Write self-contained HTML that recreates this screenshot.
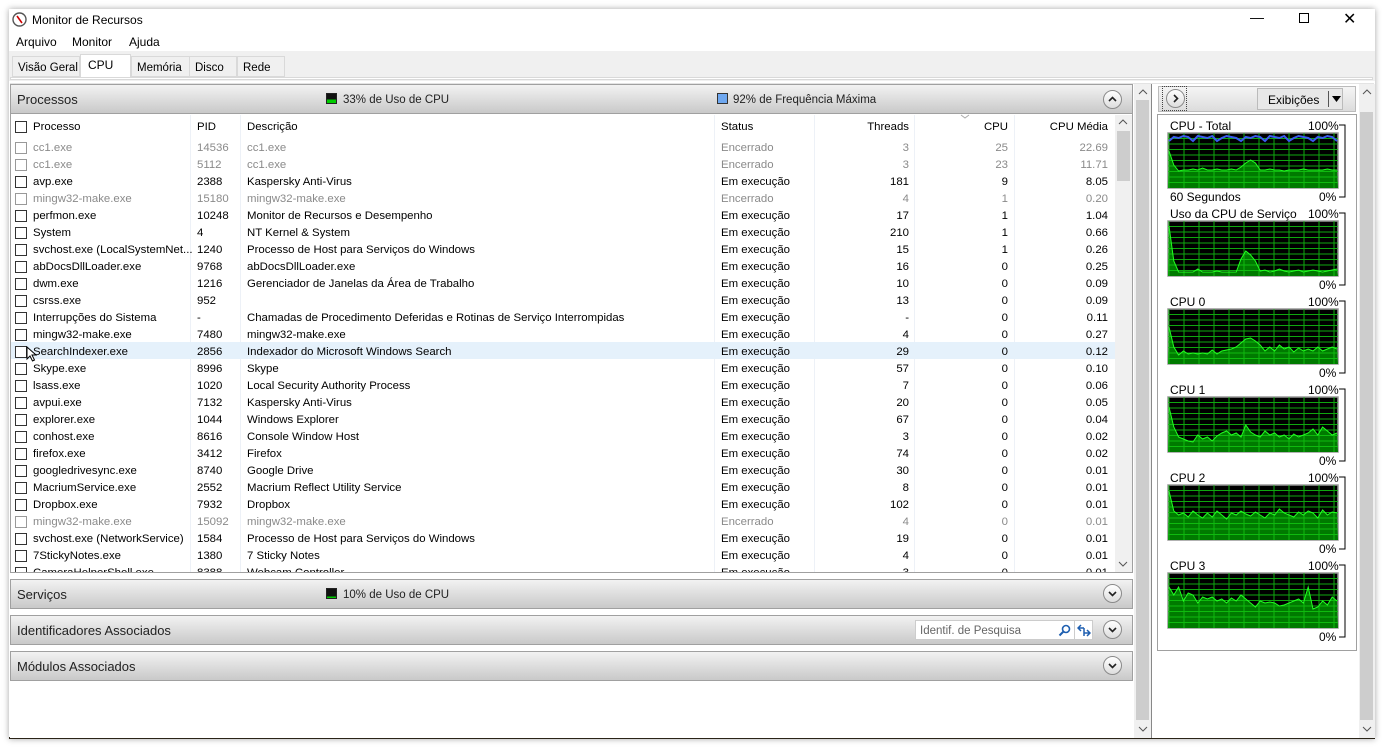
<!DOCTYPE html>
<html><head><meta charset="utf-8"><style>
*{box-sizing:border-box;margin:0;padding:0}
body{width:1382px;height:747px;background:#fff;font-family:"Liberation Sans",sans-serif;font-size:12px;color:#000;position:relative;overflow:hidden}
.win{position:absolute;left:9px;top:9px;width:1366px;height:730px;background:#fff;box-shadow:0 0 6px rgba(0,0,0,.35);border-bottom:2px solid #2a2418}
.abs{position:absolute}
.tab{position:absolute;top:56px;height:21px;border:1px solid #d9d9d9;background:#f0f0f0;padding:5px 0 0 5px;font-size:11.5px;white-space:nowrap}
.hdr{position:absolute;left:10px;width:1123px;height:30px;background:linear-gradient(#f2f2f2,#c9c9c9);border:1px solid #a0a0a0;font-size:13px;color:#222}
.hdr .t{position:absolute;left:6px;top:7px}
.circ{position:absolute;width:19px;height:19px;border-radius:50%;border:1px solid #8a8a8a;background:linear-gradient(#fff,#ddd)}
.row{position:absolute;left:11px;width:1104px;height:17px;white-space:nowrap;font-size:11.4px}
.row span{position:absolute;top:3px}
.cb{position:absolute;left:4px;top:3px;width:12px;height:12px;border:1px solid #333;background:#fff}
.g span{color:#8a8a8a}
.c1{left:22px}.c2{left:186px}.c3{left:236px}.c4{left:710px}
.r5{right:206px}.r6{right:107px}.r7{right:7px}
.sb{position:absolute;background:#e8e8e8}
.lbl{position:absolute;font-size:12px;white-space:nowrap}
</style></head><body>
<div class="win">
<svg class="abs" style="left:3px;top:3px" width="15" height="15" viewBox="0 0 15 15"><circle cx="7.5" cy="7.5" r="6.5" fill="#fff" stroke="#555" stroke-width="1.4"/><path d="M5 4 L10 11" stroke="#c00" stroke-width="1.6"/></svg>
<div class="abs" style="left:23px;top:4px;font-size:12px">Monitor de Recursos</div>
<div class="abs" style="left:1241px;top:0px;font-size:14px">&#8212;</div>
<div class="abs" style="left:1290px;top:4px;width:10px;height:10px;border:1px solid #000"></div>
<div class="abs" style="left:1334px;top:0px;font-size:16px">&#10005;</div>
<div class="abs" style="left:7px;top:26px">Arquivo</div>
<div class="abs" style="left:63px;top:26px">Monitor</div>
<div class="abs" style="left:120px;top:26px">Ajuda</div>
<div class="abs" style="left:0;top:42px;width:1366px;height:30px;background:#f0f0f0"></div>
</div>
<div class="tab" style="left:12px;width:68px">Visão Geral</div>
<div class="tab" style="left:80px;top:54px;height:24px;width:51px;background:#fff;border-bottom:none;padding-top:3px;padding-left:7px;font-size:12px">CPU</div>
<div class="tab" style="left:131px;width:59px">Memória</div>
<div class="tab" style="left:189px;width:48px">Disco</div>
<div class="tab" style="left:237px;width:48px">Rede</div>
<div class="abs" style="left:10px;top:77px;width:1363px;height:3px;border:1px solid #d9d9d9;background:#fff"></div>
<div class="abs" style="left:10px;top:83px;width:1364px;height:655px;background:#e3e3e3"></div>
<div class="abs" style="left:10px;top:84px;width:1124px;height:654px;background:#fff"></div>

<div class="hdr" style="top:84px"><div class="t">Processos</div>
<div class="abs" style="left:315px;top:8px;width:11px;height:11px;border:1px solid #222;background-image:linear-gradient(#111 60%,#0c0 60%)"></div>
<div class="abs" style="left:332px;top:9px;font-size:11.5px">33% de Uso de CPU</div>
<div class="abs" style="left:706px;top:8px;width:11px;height:11px;border:1px solid #333;background:#6fa8f0"></div>
<div class="abs" style="left:722px;top:9px;font-size:11.5px">92% de Frequência Máxima</div>
<div class="circ" style="left:1092px;top:5px"><svg width="17" height="17"><path d="M5 10L8.5 6.5L12 10" stroke="#222" stroke-width="1.6" fill="none"/></svg></div></div>
<div class="abs" style="left:10px;top:114px;width:1123px;height:459px;border:1px solid #a0a0a0;border-top:none;background:#fff"></div>
<div class="row" style="top:118px;height:20px"><div class="cb"></div><span class="c1">Processo</span><span class="c2">PID</span><span class="c3">Descrição</span><span class="c4">Status</span><span class="r5">Threads</span><span class="r6">CPU</span><span class="r7">CPU Média</span></div>
<svg class="abs" style="left:960px;top:114px" width="10" height="6"><path d="M1 1L5 4L9 1" stroke="#aaa" fill="none"/></svg>
<div class="abs" style="left:190px;top:115px;width:1px;height:457px;background:#edf1f7"></div>
<div class="abs" style="left:240px;top:115px;width:1px;height:457px;background:#edf1f7"></div>
<div class="abs" style="left:714px;top:115px;width:1px;height:457px;background:#edf1f7"></div>
<div class="abs" style="left:814px;top:115px;width:1px;height:457px;background:#edf1f7"></div>
<div class="abs" style="left:914px;top:115px;width:1px;height:457px;background:#edf1f7"></div>
<div class="abs" style="left:1014px;top:115px;width:1px;height:457px;background:#edf1f7"></div>
<div class="abs" style="left:11px;top:342px;width:1104px;height:17px;background:#e5f1fb"></div>
<div class="sb" style="left:1115px;top:115px;width:17px;height:457px;background:#f0f0f0"></div>
<div class="abs" style="left:1117px;top:131px;width:13px;height:50px;background:#cdcdcd"></div>

<div style="position:absolute;left:0;top:0;width:1382px;height:572px;overflow:hidden">
<div class="row g" style="top:139px"><div class="cb" style="border-color:#999"></div><span class="c1">cc1.exe</span><span class="c2">14536</span><span class="c3">cc1.exe</span><span class="c4">Encerrado</span><span class="r5">3</span><span class="r6">25</span><span class="r7">22.69</span></div>
<div class="row g" style="top:156px"><div class="cb" style="border-color:#999"></div><span class="c1">cc1.exe</span><span class="c2">5112</span><span class="c3">cc1.exe</span><span class="c4">Encerrado</span><span class="r5">3</span><span class="r6">23</span><span class="r7">11.71</span></div>
<div class="row" style="top:173px"><div class="cb"></div><span class="c1">avp.exe</span><span class="c2">2388</span><span class="c3">Kaspersky Anti-Virus</span><span class="c4">Em execução</span><span class="r5">181</span><span class="r6">9</span><span class="r7">8.05</span></div>
<div class="row g" style="top:190px"><div class="cb" style="border-color:#999"></div><span class="c1">mingw32-make.exe</span><span class="c2">15180</span><span class="c3">mingw32-make.exe</span><span class="c4">Encerrado</span><span class="r5">4</span><span class="r6">1</span><span class="r7">0.20</span></div>
<div class="row" style="top:207px"><div class="cb"></div><span class="c1">perfmon.exe</span><span class="c2">10248</span><span class="c3">Monitor de Recursos e Desempenho</span><span class="c4">Em execução</span><span class="r5">17</span><span class="r6">1</span><span class="r7">1.04</span></div>
<div class="row" style="top:224px"><div class="cb"></div><span class="c1">System</span><span class="c2">4</span><span class="c3">NT Kernel &amp; System</span><span class="c4">Em execução</span><span class="r5">210</span><span class="r6">1</span><span class="r7">0.66</span></div>
<div class="row" style="top:241px"><div class="cb"></div><span class="c1">svchost.exe (LocalSystemNet...</span><span class="c2">1240</span><span class="c3">Processo de Host para Serviços do Windows</span><span class="c4">Em execução</span><span class="r5">15</span><span class="r6">1</span><span class="r7">0.26</span></div>
<div class="row" style="top:258px"><div class="cb"></div><span class="c1">abDocsDllLoader.exe</span><span class="c2">9768</span><span class="c3">abDocsDllLoader.exe</span><span class="c4">Em execução</span><span class="r5">16</span><span class="r6">0</span><span class="r7">0.25</span></div>
<div class="row" style="top:275px"><div class="cb"></div><span class="c1">dwm.exe</span><span class="c2">1216</span><span class="c3">Gerenciador de Janelas da Área de Trabalho</span><span class="c4">Em execução</span><span class="r5">10</span><span class="r6">0</span><span class="r7">0.09</span></div>
<div class="row" style="top:292px"><div class="cb"></div><span class="c1">csrss.exe</span><span class="c2">952</span><span class="c4">Em execução</span><span class="r5">13</span><span class="r6">0</span><span class="r7">0.09</span></div>
<div class="row" style="top:309px"><div class="cb"></div><span class="c1">Interrupções do Sistema</span><span class="c2">-</span><span class="c3">Chamadas de Procedimento Deferidas e Rotinas de Serviço Interrompidas</span><span class="c4">Em execução</span><span class="r5">-</span><span class="r6">0</span><span class="r7">0.11</span></div>
<div class="row" style="top:326px"><div class="cb"></div><span class="c1">mingw32-make.exe</span><span class="c2">7480</span><span class="c3">mingw32-make.exe</span><span class="c4">Em execução</span><span class="r5">4</span><span class="r6">0</span><span class="r7">0.27</span></div>
<div class="row" style="top:343px"><div class="cb"></div><span class="c1">SearchIndexer.exe</span><span class="c2">2856</span><span class="c3">Indexador do Microsoft Windows Search</span><span class="c4">Em execução</span><span class="r5">29</span><span class="r6">0</span><span class="r7">0.12</span></div>
<div class="row" style="top:360px"><div class="cb"></div><span class="c1">Skype.exe</span><span class="c2">8996</span><span class="c3">Skype</span><span class="c4">Em execução</span><span class="r5">57</span><span class="r6">0</span><span class="r7">0.10</span></div>
<div class="row" style="top:377px"><div class="cb"></div><span class="c1">lsass.exe</span><span class="c2">1020</span><span class="c3">Local Security Authority Process</span><span class="c4">Em execução</span><span class="r5">7</span><span class="r6">0</span><span class="r7">0.06</span></div>
<div class="row" style="top:394px"><div class="cb"></div><span class="c1">avpui.exe</span><span class="c2">7132</span><span class="c3">Kaspersky Anti-Virus</span><span class="c4">Em execução</span><span class="r5">20</span><span class="r6">0</span><span class="r7">0.05</span></div>
<div class="row" style="top:411px"><div class="cb"></div><span class="c1">explorer.exe</span><span class="c2">1044</span><span class="c3">Windows Explorer</span><span class="c4">Em execução</span><span class="r5">67</span><span class="r6">0</span><span class="r7">0.04</span></div>
<div class="row" style="top:428px"><div class="cb"></div><span class="c1">conhost.exe</span><span class="c2">8616</span><span class="c3">Console Window Host</span><span class="c4">Em execução</span><span class="r5">3</span><span class="r6">0</span><span class="r7">0.02</span></div>
<div class="row" style="top:445px"><div class="cb"></div><span class="c1">firefox.exe</span><span class="c2">3412</span><span class="c3">Firefox</span><span class="c4">Em execução</span><span class="r5">74</span><span class="r6">0</span><span class="r7">0.02</span></div>
<div class="row" style="top:462px"><div class="cb"></div><span class="c1">googledrivesync.exe</span><span class="c2">8740</span><span class="c3">Google Drive</span><span class="c4">Em execução</span><span class="r5">30</span><span class="r6">0</span><span class="r7">0.01</span></div>
<div class="row" style="top:479px"><div class="cb"></div><span class="c1">MacriumService.exe</span><span class="c2">2552</span><span class="c3">Macrium Reflect Utility Service</span><span class="c4">Em execução</span><span class="r5">8</span><span class="r6">0</span><span class="r7">0.01</span></div>
<div class="row" style="top:496px"><div class="cb"></div><span class="c1">Dropbox.exe</span><span class="c2">7932</span><span class="c3">Dropbox</span><span class="c4">Em execução</span><span class="r5">102</span><span class="r6">0</span><span class="r7">0.01</span></div>
<div class="row g" style="top:513px"><div class="cb" style="border-color:#999"></div><span class="c1">mingw32-make.exe</span><span class="c2">15092</span><span class="c3">mingw32-make.exe</span><span class="c4">Encerrado</span><span class="r5">4</span><span class="r6">0</span><span class="r7">0.01</span></div>
<div class="row" style="top:530px"><div class="cb"></div><span class="c1">svchost.exe (NetworkService)</span><span class="c2">1584</span><span class="c3">Processo de Host para Serviços do Windows</span><span class="c4">Em execução</span><span class="r5">19</span><span class="r6">0</span><span class="r7">0.01</span></div>
<div class="row" style="top:547px"><div class="cb"></div><span class="c1">7StickyNotes.exe</span><span class="c2">1380</span><span class="c3">7 Sticky Notes</span><span class="c4">Em execução</span><span class="r5">4</span><span class="r6">0</span><span class="r7">0.01</span></div>
<div class="row" style="top:564px"><div class="cb"></div><span class="c1">CameraHelperShell.exe</span><span class="c2">8388</span><span class="c3">Webcam Controller</span><span class="c4">Em execução</span><span class="r5">3</span><span class="r6">0</span><span class="r7">0.01</span></div>
</div>
<svg class="abs" style="left:1118px;top:119px" width="10" height="6"><path d="M1 5L5 1L9 5" stroke="#555" fill="none"/></svg>
<svg class="abs" style="left:1118px;top:561px" width="10" height="6"><path d="M1 1L5 5L9 1" stroke="#555" fill="none"/></svg>

<div class="hdr" style="top:579px"><div class="t">Serviços</div>
<div class="abs" style="left:315px;top:8px;width:11px;height:11px;border:1px solid #222;background-image:linear-gradient(#111 85%,#0c0 85%)"></div>
<div class="abs" style="left:332px;top:9px;font-size:11.5px">10% de Uso de CPU</div>
<div class="circ" style="left:1092px;top:4px"><svg width="17" height="17"><path d="M5 7L8.5 10.5L12 7" stroke="#222" stroke-width="1.6" fill="none"/></svg></div></div>
<div class="hdr" style="top:615px"><div class="t">Identificadores Associados</div>
<div class="abs" style="left:904px;top:4px;width:178px;height:20px;background:#fff;border:1px solid #ccc;color:#666;font-size:11.5px;padding:4px 4px">Identif. de Pesquisa
<svg style="position:absolute;left:142px;top:3px" width="13" height="13"><circle cx="8" cy="5" r="3.5" stroke="#1e5fb0" stroke-width="1.6" fill="none"/><path d="M5.5 7.5L1.5 11.5" stroke="#1e5fb0" stroke-width="2"/></svg>
<span style="position:absolute;left:158px;top:0;width:1px;height:18px;background:#ccc"></span>
<svg style="position:absolute;left:161px;top:3px" width="14" height="13"><path d="M1 4H7M4 1L1 4L4 7M13 9H7M10 6L13 9L10 12M7 4V12" stroke="#1e5fb0" stroke-width="1.5" fill="none"/></svg></div>
<div class="circ" style="left:1092px;top:4px"><svg width="17" height="17"><path d="M5 7L8.5 10.5L12 7" stroke="#222" stroke-width="1.6" fill="none"/></svg></div></div>
<div class="hdr" style="top:651px"><div class="t">Módulos Associados</div>
<div class="circ" style="left:1092px;top:4px"><svg width="17" height="17"><path d="M5 7L8.5 10.5L12 7" stroke="#222" stroke-width="1.6" fill="none"/></svg></div></div>

<div class="sb" style="left:1134px;top:84px;width:17px;height:654px;background:#f0f0f0"></div>
<div class="abs" style="left:1136px;top:100px;width:13px;height:620px;background:#cdcdcd"></div>
<svg class="abs" style="left:1138px;top:89px" width="10" height="6"><path d="M1 5L5 1L9 5" stroke="#555" fill="none"/></svg>
<svg class="abs" style="left:1138px;top:726px" width="10" height="6"><path d="M1 1L5 5L9 1" stroke="#555" fill="none"/></svg>
<div class="abs" style="left:1151px;top:84px;width:1px;height:654px;background:#888"></div>
<div class="abs" style="left:1152px;top:84px;width:207px;height:654px;background:#fff"></div>
<div class="abs" style="left:1158px;top:86px;width:198px;height:26px;background:linear-gradient(#f5f5f5,#dcdcdc);border:1px solid #bbb"></div>
<div class="abs" style="left:1162px;top:86px;width:25px;height:25px;border:1px dotted #444"></div>
<div class="circ" style="left:1166px;top:89px"><svg width="17" height="17"><path d="M7 5L10.5 8.5L7 12" stroke="#222" stroke-width="1.6" fill="none"/></svg></div>
<div class="abs" style="left:1257px;top:88px;width:86px;height:22px;border:1px solid #bbb;background:#e8e8e8;font-size:12px;padding:4px 0 0 10px">Exibições<span style="position:absolute;left:70px;top:2px;width:1px;height:16px;background:#555"></span><svg style="position:absolute;left:74px;top:7px" width="9" height="6"><path d="M0 0H9L4.5 6Z" fill="#000"/></svg></div>
<div class="abs" style="left:1157px;top:114px;width:200px;height:537px;border:1px solid #a0a0a0"></div>
<div class="sb" style="left:1359px;top:84px;width:16px;height:654px;background:#f0f0f0"></div>
<div class="abs" style="left:1360px;top:112px;width:13px;height:608px;background:#cdcdcd"></div>
<svg class="abs" style="left:1362px;top:89px" width="10" height="6"><path d="M1 5L5 1L9 5" stroke="#555" fill="none"/></svg>
<svg class="abs" style="left:1362px;top:726px" width="10" height="6"><path d="M1 1L5 5L9 1" stroke="#555" fill="none"/></svg>
<div id="gwrap" style="position:absolute;left:0;top:0;width:0;height:0"></div>
<svg class="abs" style="left:26px;top:346px" width="12" height="16"><path d="M1 1V13L4 10L6.5 15L8.5 14L6 9H10Z" fill="#fff" stroke="#000"/></svg>
<script>
(function(){
var labels=[["CPU - Total","60 Segundos"],["Uso da CPU de Serviço",""],["CPU 0",""],["CPU 1",""],["CPU 2",""],["CPU 3",""]];
var shapes=[
[18,32,38,37,37,36,37,35,37,37,36,37,37,36,37,34,30,27,30,37,37,36,37,37,38,37,37,37,36,37,37,37,37,36,37,37],
[5,40,51,51,51,51,48,51,51,51,50,51,51,51,51,38,30,34,40,50,49,51,50,48,50,51,50,49,51,50,49,50,51,50,49,48],
[18,38,46,42,45,44,45,44,45,41,45,42,41,40,38,34,30,29,32,36,42,38,42,36,40,38,43,39,42,40,42,38,42,40,38,40],
[10,30,40,42,44,45,38,42,40,44,39,36,34,38,36,40,28,35,38,40,34,38,36,40,38,42,37,40,38,36,32,38,30,34,38,36],
[6,26,30,28,32,26,30,33,28,32,26,30,34,28,30,26,29,31,27,30,33,28,30,24,28,30,32,27,30,26,28,33,25,30,27,28],
[14,22,14,28,20,22,30,24,26,24,28,26,30,25,28,22,26,30,34,28,30,29,30,33,32,30,28,26,30,14,36,34,28,32,24,28]];
var g="",h="";
for(var i=0;i<6;i++){var top=125+i*88,gy=top+8,x0=1168,w=170,hh=55;
h+='<div class="lbl" style="left:1170px;top:'+(top-6)+'px">'+labels[i][0]+'</div><div class="lbl" style="left:1308px;top:'+(top-6)+'px">100%</div><div class="lbl" style="left:1319px;top:'+(top+65)+'px">0%</div>';
if(labels[i][1])h+='<div class="lbl" style="left:1170px;top:'+(top+65)+'px">'+labels[i][1]+'</div>';
g+='<path d="M1339 '+top+'H1345V'+(top+72)+'H1339" fill="none" stroke="#000"/>';
g+='<rect x="'+x0+'" y="'+gy+'" width="'+w+'" height="'+hh+'" fill="#000" stroke="#999" stroke-width="1.5"/>';
var s=shapes[i],pts="";for(var k=0;k<s.length;k++){pts+=(x0+1+k*(w-2)/(s.length-1)).toFixed(1)+","+(gy+s[k])+" ";}
g+='<polygon points="'+x0+','+(gy+hh)+' '+pts+(x0+w)+','+(gy+hh)+'" fill="#007a00"/>';
var pat='';for(var vx=x0+1;vx<x0+w;vx+=15)pat+='M'+vx+' '+gy+'V'+(gy+hh);for(var hy=gy+5.5;hy<gy+hh;hy+=5.5)pat+='M'+x0+' '+hy.toFixed(1)+'H'+(x0+w);
g+='<path d="'+pat+'" stroke="#12c612" stroke-width="1" fill="none" opacity=".85"/>';
g+='<polyline points="'+pts+'" fill="none" stroke="#22ff22" stroke-width="1"/>';
if(i==0){var b="";for(var k=0;k<36;k++){b+=(x0+1+k*(w-2)/35).toFixed(1)+","+(gy+3+((k*7)%5==0?5:(k%3)))+" ";}g+='<polyline points="'+b+'" fill="none" stroke="#3a5cf0" stroke-width="2"/>';}
}
document.getElementById("gwrap").innerHTML='<svg style="position:absolute;left:0;top:0" width="1382" height="747">'+g+'</svg>'+h;
})();
</script>
</body></html>
